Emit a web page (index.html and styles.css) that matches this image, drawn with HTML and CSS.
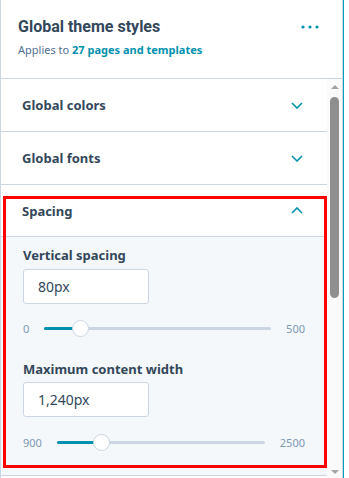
FILE: index.html
```html
<html><head>
<meta charset="UTF-8">
<meta name="viewport" content="width=device-width, initial-scale=1.0">
<title>Global theme styles</title>
<link rel="stylesheet" href="styles.css">
</head>
<body>
  <div class="frame">
    <div class="panel">
      <header class="panel-header">
        <div class="header-text">
          <h1>Global theme styles</h1>
          <p>Applies to <a href="#">27 pages and templates</a></p>
        </div>
        <button class="more" aria-label="More">
          <svg width="18" height="4" viewBox="0 0 18 4"><circle cx="2" cy="2" r="1.6"/><circle cx="9" cy="2" r="1.6"/><circle cx="16" cy="2" r="1.6"/></svg>
        </button>
      </header>

      <div class="panel-scroll">
        <div class="sections">
          <section class="accordion">
            <div class="acc-head">
              <span>Global colors</span>
              <svg class="chevron" width="12" height="7" viewBox="0 0 12 7"><polyline points="1,1 6,6 11,1"/></svg>
            </div>
          </section>
          <section class="accordion">
            <div class="acc-head">
              <span>Global fonts</span>
              <svg class="chevron" width="12" height="7" viewBox="0 0 12 7"><polyline points="1,1 6,6 11,1"/></svg>
            </div>
          </section>
          <section class="accordion open">
            <div class="acc-head">
              <span>Spacing</span>
              <svg class="chevron" width="12" height="7" viewBox="0 0 12 7"><polyline points="1,6 6,1 11,6"/></svg>
            </div>
            <div class="acc-body">
              <div class="field">
                <label>Vertical spacing</label>
                <div class="text-input">80px</div>
                <div class="slider">
                  <span class="slider-min">0</span>
                  <div class="track">
                    <div class="track-fill" style="width: 16%"></div>
                    <div class="thumb" style="left: 16%"></div>
                  </div>
                  <span class="slider-max">500</span>
                </div>
              </div>
              <div class="field">
                <label>Maximum content width</label>
                <div class="text-input">1,240px</div>
                <div class="slider">
                  <span class="slider-min">900</span>
                  <div class="track">
                    <div class="track-fill" style="width: 21.25%"></div>
                    <div class="thumb" style="left: 21.25%"></div>
                  </div>
                  <span class="slider-max">2500</span>
                </div>
              </div>
            </div>
          </section>
          <section class="accordion">
            <div class="acc-head"></div>
          </section>
        </div>

        <div class="scrollbar">
          <div class="sb-arrow up"></div>
          <div class="sb-thumb"></div>
          <div class="sb-rest"></div>
          <div class="sb-arrow down"></div>
        </div>
      </div>
    </div>
    <div class="highlight"></div>
  </div>
</body></html>
```

FILE: styles.css
```css
body {
  font-family: 'Noto Sans', sans-serif;
  margin: 0;
  padding: 0;
  background-color: white;
  color: #33475b;
}
.frame {
  position: relative;
  width: 343px;
  height: 478px;
  border-right: 1px solid #00a4bd;
  overflow: hidden;
}
.panel {
  width: 341px;
  height: 478px;
  border-left: 1px solid #cbd6e2;
  border-right: 1px solid #cbd6e2;
  display: flex;
  flex-direction: column;
}
.panel-header {
  height: 79px;
  flex-shrink: 0;
  box-sizing: border-box;
  padding: 17px 23px 0 17px;
  border-bottom: 1px solid #cbd6e2;
  display: flex;
  justify-content: space-between;
  align-items: flex-start;
}
.panel-header h1 {
  margin: 0;
  font-family: Roboto, sans-serif;
  font-size: 16px;
  line-height: 20px;
  font-weight: 700;
}
.panel-header p {
  margin: 6px 0 0;
  font-size: 11px;
  line-height: 14px;
  color: #516f90;
}
.panel-header a {
  color: #0091ae;
  font-weight: 700;
  text-decoration: none;
}
.more {
  border: none;
  background: none;
  padding: 0;
  margin-top: 8px;
  line-height: 0;
}
.more svg {
  fill: #0091ae;
}
.panel-scroll {
  flex: 1;
  display: flex;
  overflow: hidden;
}
.sections {
  flex: 1;
  overflow: hidden;
}
.accordion {
  border-bottom: 1px solid #cbd6e2;
}
.acc-head {
  height: 52px;
  box-sizing: border-box;
  padding: 0 24px 0 21px;
  display: flex;
  justify-content: space-between;
  align-items: center;
  font-size: 13px;
  font-weight: 700;
  background-color: white;
}
.chevron {
  fill: none;
  stroke: #0091ae;
  stroke-width: 1.6;
}
.accordion.open .acc-head {
  border-bottom: 1px solid #cbd6e2;
}
.acc-body {
  background-color: #f5f8fa;
  padding: 10px 22px 23px;
}
.field + .field {
  margin-top: 23px;
}
.field label {
  display: block;
  font-size: 13px;
  line-height: 16px;
  font-weight: 700;
}
.text-input {
  margin-top: 6px;
  width: 126px;
  height: 35px;
  box-sizing: border-box;
  padding: 0 14px;
  border: 1px solid #cbd6e2;
  border-radius: 3px;
  background-color: white;
  font-size: 14px;
  line-height: 33px;
}
.field + .field .text-input {
  margin-top: 5px;
}
.slider {
  margin-top: 14px;
  height: 20px;
  display: flex;
  align-items: center;
  gap: 15px;
  font-size: 11px;
  color: #7c98b6;
}
.field + .field .slider {
  margin-top: 15px;
}
.track {
  position: relative;
  flex: 1;
  height: 3px;
  background-color: #cbd6e2;
  border-radius: 2px;
}
.track-fill {
  height: 3px;
  background-color: #0091ae;
  border-radius: 2px;
}
.thumb {
  position: absolute;
  top: 50%;
  width: 17px;
  height: 17px;
  box-sizing: border-box;
  margin: -8.5px 0 0 -8.5px;
  border: 1px solid #cbd6e2;
  border-radius: 50%;
  background-color: white;
}
.scrollbar {
  width: 15px;
  flex-shrink: 0;
  background-color: #fafafa;
  display: flex;
  flex-direction: column;
  align-items: center;
}
.sb-arrow {
  width: 0;
  height: 0;
  border-left: 4px solid transparent;
  border-right: 4px solid transparent;
}
.sb-arrow.up {
  margin-top: 6px;
  border-bottom: 4px solid #a3a3a3;
}
.sb-arrow.down {
  margin-bottom: 4px;
  border-top: 4px solid #a3a3a3;
}
.sb-thumb {
  margin-top: 8px;
  width: 9px;
  height: 201px;
  border-radius: 5px;
  background-color: #8f8f8f;
}
.sb-rest {
  flex: 1;
}
.highlight {
  position: absolute;
  left: 3px;
  top: 196px;
  width: 324px;
  height: 272px;
  box-sizing: border-box;
  border: 3px solid #ff0000;
}
```
